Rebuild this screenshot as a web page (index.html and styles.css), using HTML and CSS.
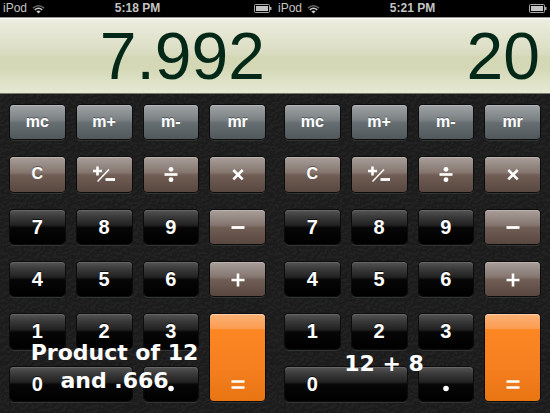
FILE: index.html
```html
<!DOCTYPE html>
<html lang="en">
<head>
<meta charset="utf-8">
<title>Calculator</title>
<link rel="stylesheet" href="styles.css">
</head>
<body>
<svg class="defs" aria-hidden="true">
  <defs>
    <filter id="grain" x="0" y="0" width="100%" height="100%">
      <feTurbulence type="fractalNoise" baseFrequency="0.3" numOctaves="2" seed="4" result="noise"/>
      <feDiffuseLighting in="noise" surfaceScale="1" diffuseConstant="1" lighting-color="#232323">
        <feDistantLight azimuth="250" elevation="60"/>
      </feDiffuseLighting>
    </filter>
    <symbol id="wifi" viewBox="0 0 14 10">
      <path d="M1 4Q7-1 13 4" fill="none" stroke="#666" stroke-width="1.6"/>
      <path d="M3 6Q7 2.600 11 6" fill="none" stroke="#c8c8c8" stroke-width="1.6"/>
      <path d="M4.800 7.600Q7 5.800 9.200 7.600L7 9.800Z" fill="#c8c8c8"/>
    </symbol>
    <symbol id="battery" viewBox="0 0 18 9">
      <rect x=".5" y=".5" width="15" height="8" rx="1" fill="none" stroke="#aaa"/>
      <rect x="2" y="2" width="12" height="5" fill="#c4c4c4"/>
      <path d="M16 3h1.500v3H16z" fill="#b0b0b0"/>
    </symbol>
    <symbol id="sign" viewBox="0 0 24 18">
      <path d="M1 6h9M5.500 1.500v9" stroke="#fff" stroke-width="2.600"/>
      <path d="M5.500 16.500L17 4.500" stroke="#fff" stroke-width="1.500"/>
      <path d="M13.500 14.500H23" stroke="#fff" stroke-width="2.800"/>
    </symbol>
    <symbol id="divide" viewBox="0 0 24 18">
      <path d="M5.500 9.500h13" stroke="#fff" stroke-width="2.600"/>
      <circle cx="12" cy="4.300" r="2.400" fill="#fff"/><circle cx="12" cy="14.700" r="2.400" fill="#fff"/>
    </symbol>
    <symbol id="times" viewBox="0 0 24 18">
      <path d="M7.300 5l9.400 9.400M16.700 5L7.300 14.400" stroke="#fff" stroke-width="2.600"/>
    </symbol>
    <symbol id="minus" viewBox="0 0 24 18"><path d="M5.500 9.500h13" stroke="#fff" stroke-width="2.800"/></symbol>
    <symbol id="plus" viewBox="0 0 24 18"><path d="M5.500 10h13M12 3.500v13" stroke="#fff" stroke-width="2.600"/></symbol>
    <symbol id="equals" viewBox="0 0 24 18"><path d="M5.500 6.500h13M5.500 12.500h13" stroke="#fff" stroke-width="2.600"/></symbol>
    <symbol id="point" viewBox="0 0 24 18"><circle cx="12" cy="13.500" r="2.800" fill="#fff"/></symbol>
  </defs>
</svg>
<main class="screens">
  <section class="calculator">
    <header class="status">
      <span class="carrier">iPod <svg class="wifi"><use href="#wifi"/></svg></span>
      <time class="clock">5:18 PM</time>
      <svg class="battery"><use href="#battery"/></svg>
    </header>
    <output class="display">7.992</output>
    <div class="pad">
      <svg class="texture" aria-hidden="true"><rect width="100%" height="100%" filter="url(#grain)"/></svg>
      <div class="keys">
        <button class="key memory">mc</button>
        <button class="key memory">m+</button>
        <button class="key memory">m-</button>
        <button class="key memory">mr</button>
        <button class="key operator">C</button>
        <button class="key operator" aria-label="Change sign"><svg class="glyph"><use href="#sign"/></svg></button>
        <button class="key operator" aria-label="Divide"><svg class="glyph"><use href="#divide"/></svg></button>
        <button class="key operator" aria-label="Multiply"><svg class="glyph"><use href="#times"/></svg></button>
        <button class="key">7</button>
        <button class="key">8</button>
        <button class="key">9</button>
        <button class="key operator" aria-label="Subtract"><svg class="glyph"><use href="#minus"/></svg></button>
        <button class="key">4</button>
        <button class="key">5</button>
        <button class="key">6</button>
        <button class="key operator" aria-label="Add"><svg class="glyph"><use href="#plus"/></svg></button>
        <button class="key">1</button>
        <button class="key">2</button>
        <button class="key">3</button>
        <button class="key equals" aria-label="Equals"><svg class="glyph"><use href="#equals"/></svg></button>
        <button class="key zero"><span class="zero-label">0</span></button>
        <button class="key" aria-label="Decimal point"><svg class="glyph"><use href="#point"/></svg></button>
      </div>
      <p class="caption caption-product">Product of 12<br>and .666</p>
    </div>
  </section>
  <section class="calculator">
    <header class="status">
      <span class="carrier">iPod <svg class="wifi"><use href="#wifi"/></svg></span>
      <time class="clock">5:21 PM</time>
      <svg class="battery"><use href="#battery"/></svg>
    </header>
    <output class="display">20</output>
    <div class="pad">
      <svg class="texture" aria-hidden="true"><rect width="100%" height="100%" filter="url(#grain)"/></svg>
      <div class="keys">
        <button class="key memory">mc</button>
        <button class="key memory">m+</button>
        <button class="key memory">m-</button>
        <button class="key memory">mr</button>
        <button class="key operator">C</button>
        <button class="key operator" aria-label="Change sign"><svg class="glyph"><use href="#sign"/></svg></button>
        <button class="key operator" aria-label="Divide"><svg class="glyph"><use href="#divide"/></svg></button>
        <button class="key operator" aria-label="Multiply"><svg class="glyph"><use href="#times"/></svg></button>
        <button class="key">7</button>
        <button class="key">8</button>
        <button class="key">9</button>
        <button class="key operator" aria-label="Subtract"><svg class="glyph"><use href="#minus"/></svg></button>
        <button class="key">4</button>
        <button class="key">5</button>
        <button class="key">6</button>
        <button class="key operator" aria-label="Add"><svg class="glyph"><use href="#plus"/></svg></button>
        <button class="key">1</button>
        <button class="key">2</button>
        <button class="key">3</button>
        <button class="key equals" aria-label="Equals"><svg class="glyph"><use href="#equals"/></svg></button>
        <button class="key zero"><span class="zero-label">0</span></button>
        <button class="key" aria-label="Decimal point"><svg class="glyph"><use href="#point"/></svg></button>
      </div>
      <p class="caption caption-sum">12 + 8</p>
    </div>
  </section>
</main>
</body>
</html>
```
FILE: styles.css
```css
* {
  box-sizing: border-box;
}

body {
  margin: 0;
  background: #1c1c1c;
  font-family: "Liberation Sans", Arial, sans-serif;
}

.defs {
  position: absolute;
  width: 0;
  height: 0;
}

.screens {
  display: grid;
  grid-template-columns: 1fr 1fr;
  min-height: 100vh;
}

.calculator {
  display: flex;
  flex-direction: column;
}

.status {
  display: grid;
  grid-template-columns: 1fr auto 1fr;
  align-items: center;
  height: 17px;
  padding: 0 3px;
  background: #000;
  color: #c4c4c4;
  font-size: 12px;
  line-height: 17px;
}

.carrier {
  display: flex;
  align-items: center;
  gap: 5px;
}

.wifi {
  width: 13px;
  height: 10px;
}

.clock {
  font-weight: bold;
}

.battery {
  justify-self: end;
  width: 18px;
  height: 9px;
}

.display {
  height: 77px;
  padding: 0 10px;
  border-top: 1px solid #9b9d92;
  border-bottom: 1px solid #777b6e;
  background: linear-gradient(#fff 0, #eceddf 2px, #d9dcc0 48%, #d3d7b4 52%, #d4d8b6 67%, #e6e9d4 100%);
  color: #032817;
  font-size: 66px;
  line-height: 77px;
  text-align: right;
}

.pad {
  position: relative;
  display: flex;
  flex: 1;
  padding: 11px 10px 12px;
  background: #1c1c1c;
}

.texture {
  position: absolute;
  inset: 0;
  width: 100%;
  height: 100%;
}

.keys {
  position: relative;
  display: grid;
  flex: 1;
  grid-template-columns: repeat(4, 1fr);
  grid-template-rows: repeat(6, 1fr);
  gap: 18px 12px;
}

.key {
  display: flex;
  align-items: center;
  justify-content: center;
  min-width: 0;
  padding: 0;
  border: 0;
  border-radius: 4px;
  background: linear-gradient(#555 0, #3a3a3a 20%, #222 44%, #060606 52%, #000 100%);
  box-shadow: inset 0 1px #666, 0 0 0 1px #0c0c0c, 0 2px #303432;
  color: #fff;
  font: bold 20px/20px "Liberation Sans", Arial, sans-serif;
  text-shadow: 0 -1px #111;
}

.memory {
  background: linear-gradient(#a0a4a7 0, #7b8083 44%, #676e71 52%, #50585b 100%);
  box-shadow: inset 0 1px #b4b7b9, 0 0 0 1px #0c0c0c, 0 2px #303432;
  font-size: 16px;
  text-shadow: 0 -1px #555b5e;
}

.operator {
  background: linear-gradient(#a99f9b 0, #85766f 44%, #705e55 52%, #58473f 100%);
  box-shadow: inset 0 1px #bcb2ae, 0 0 0 1px #0c0c0c, 0 2px #303432;
  font-size: 16px;
  text-shadow: 0 -1px #5f5048;
}

.equals {
  grid-row: span 2;
  align-items: flex-end;
  padding-bottom: 8px;
  background: linear-gradient(#fbb277 0, #fb9c50 17%, #fb8622 18%, #f68020 60%, #e87412 100%);
  box-shadow: inset 0 1px #fdd0a8, 0 0 0 1px #0c0c0c, 0 2px #303432;
}

.zero {
  display: grid;
  grid-column: span 2;
  grid-template-columns: 1fr 1fr;
  column-gap: 12px;
}

.glyph {
  width: 24px;
  height: 18px;
}

.caption {
  position: absolute;
  margin: 0;
  color: #fff;
  font: bold 22px/28px "DejaVu Sans", sans-serif;
  text-align: center;
  white-space: nowrap;
  pointer-events: none;
}

.caption-product {
  right: 46px;
  bottom: 18px;
  left: 0;
}

.caption-sum {
  right: 57px;
  bottom: 35px;
  left: 0;
}
```
